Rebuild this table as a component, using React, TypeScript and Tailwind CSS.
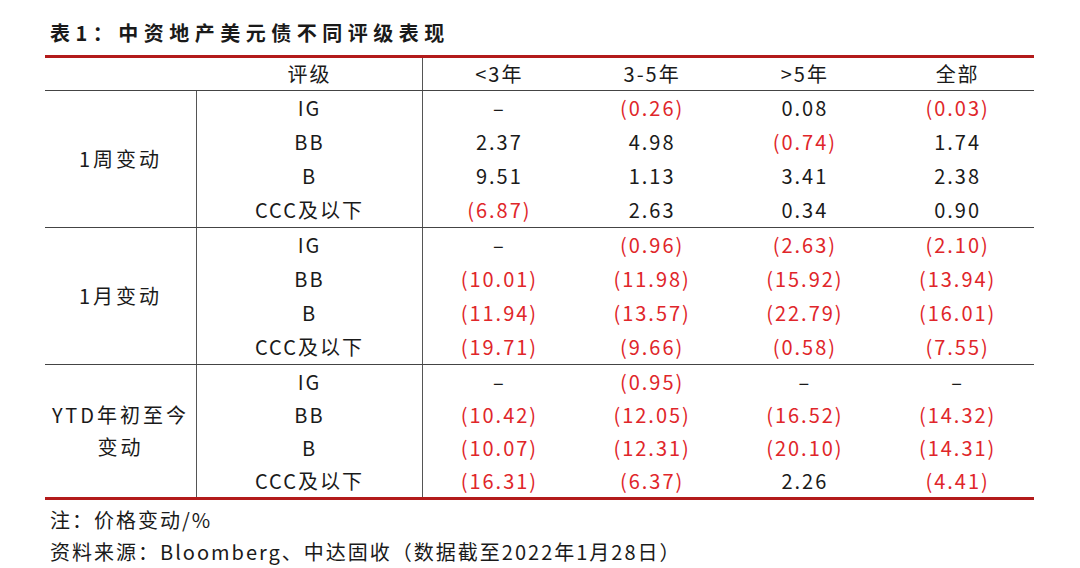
import React from "react";

type Group = {
  label: React.ReactNode;
  height: string;
  last?: boolean;
  rows: [string, string[]][];
};

const groups: Group[] = [
  {
    label: "1周变动",
    height: "h-[137px]",
    rows: [
      ["IG", ["–", "(0.26)", "0.08", "(0.03)"]],
      ["BB", ["2.37", "4.98", "(0.74)", "1.74"]],
      ["B", ["9.51", "1.13", "3.41", "2.38"]],
      ["CCC及以下", ["(6.87)", "2.63", "0.34", "0.90"]]
    ]
  },
  {
    label: "1月变动",
    height: "h-[137px]",
    rows: [
      ["IG", ["–", "(0.96)", "(2.63)", "(2.10)"]],
      ["BB", ["(10.01)", "(11.98)", "(15.92)", "(13.94)"]],
      ["B", ["(11.94)", "(13.57)", "(22.79)", "(16.01)"]],
      ["CCC及以下", ["(19.71)", "(9.66)", "(0.58)", "(7.55)"]]
    ]
  },
  {
    label: (
      <>
        YTD年初至今
        <br />
        变动
      </>
    ),
    height: "h-[135px]",
    last: true,
    rows: [
      ["IG", ["–", "(0.95)", "–", "–"]],
      ["BB", ["(10.42)", "(12.05)", "(16.52)", "(14.32)"]],
      ["B", ["(10.07)", "(12.31)", "(20.10)", "(14.31)"]],
      ["CCC及以下", ["(16.31)", "(6.37)", "2.26", "(4.41)"]]
    ]
  }
];

const font = "font-['Noto_Sans_CJK_SC','Noto_Sans',sans-serif]";

export default function App() {
  return (
    <div className={`h-[568px] w-[1080px] bg-white text-[#1a1a1a] ${font}`}>
      <div className="pl-[50px] pt-[19px] text-[20px] font-bold leading-[28px] tracking-[5.5px]">
        表1：中资地产美元债不同评级表现
      </div>

      <div className="ml-[45px] mt-[8px] w-[989px] text-[20px] tracking-[2px]">
        {/* header */}
        <div className="flex h-[36px] border-t-[3px] border-b border-t-[#b31b1b] border-b-[#444]">
          <div className="w-[152px]" />
          <div className="flex w-[226px] items-center justify-center border-r border-[#555]">评级</div>
          {["<3年", "3-5年", ">5年", "全部"].map((h) => (
            <div key={h} className="flex flex-1 items-center justify-center">
              {h}
            </div>
          ))}
        </div>

        {groups.map((g, gi) => (
          <div
            key={gi}
            className={`flex ${g.height} ${
              g.last ? "border-b-[3px] border-[#b31b1b]" : "border-b border-[#444]"
            }`}
          >
            <div className="flex w-[152px] items-center justify-center border-r border-[#555] text-center leading-[32px] tracking-[3px]">
              <div>{g.label}</div>
            </div>
            <div className="flex flex-1 flex-col">
              {g.rows.map(([rating, values]) => (
                <div key={rating} className="flex flex-1 items-center">
                  <div className="flex h-full w-[226px] items-center justify-center border-r border-[#555]">
                    {rating}
                  </div>
                  {values.map((v, vi) => (
                    <div
                      key={vi}
                      className={`flex flex-1 items-center justify-center ${
                        v.startsWith("(") ? "text-[#e0262a]" : ""
                      }`}
                    >
                      {v}
                    </div>
                  ))}
                </div>
              ))}
            </div>
          </div>
        ))}
      </div>

      <div className="pl-[50px] pt-[4px] text-[20px] leading-[32px] tracking-[2px]">
        <div>注：价格变动/%</div>
        <div>资料来源：Bloomberg、中达固收（数据截至2022年1月28日）</div>
      </div>
    </div>
  );
}
